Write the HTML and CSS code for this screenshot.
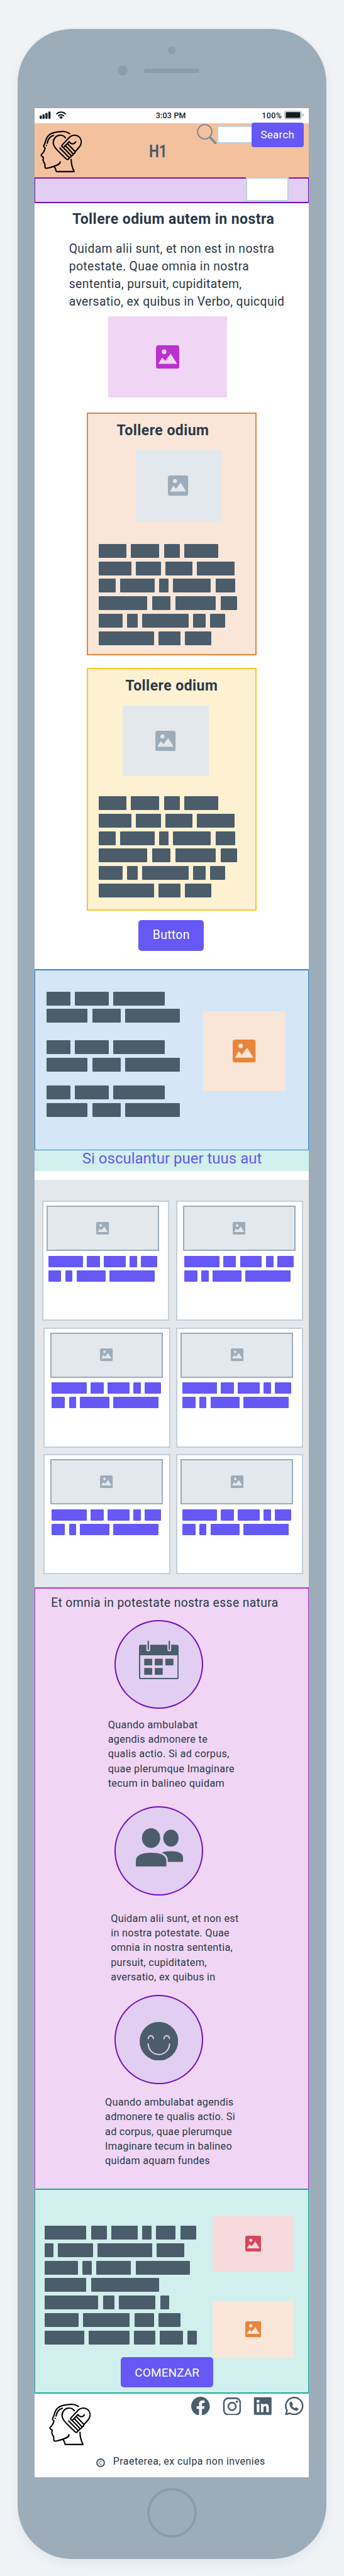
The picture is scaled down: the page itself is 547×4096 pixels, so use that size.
FILE: index.html
```html
<!DOCTYPE html>
<html lang="la">
<head>
<meta charset="utf-8">
<title>H1</title>
<link rel="stylesheet" href="styles.css">
</head>
<body>
<svg class="defs" aria-hidden="true">
  <symbol id="picture" viewBox="0 0 24 24"><path fill="currentColor" fill-rule="evenodd" d="M2.8 0H21.2Q24 0 24 2.8V21.2Q24 24 21.2 24H2.8Q0 24 0 21.2V2.8Q0 0 2.8 0ZM8.3 4.2A2.4 2.4 0 1 0 8.3 9 2.4 2.4 0 1 0 8.3 4.2ZM2.5 18.9H21.5L15 8.5 9.6 15.7 6.3 12.3Z"/></symbol>
  <symbol id="head" viewBox="0 0 66 66"><g fill="none" stroke="#000" stroke-width="2.1" stroke-linecap="round" stroke-linejoin="round">
    <path d="M46.7 4.3C42.5 1.6 38.5.8 34.5 1.1C26 1.5 18 3 14.2 6.5C8.2 12 8.5 17.5 7.2 20.5C5.8 22 4.9 24.5 6.2 25.8L7.8 27.5C6.8 31.5 4 35.8 1.6 38C.8 39.8 2 40.2 4.6 41.8C5.8 43.8 3.6 45.2 4.6 47C5.8 47.5 4.8 49 5.6 50.2C8.3 51.6 7.3 53.3 7.4 55.5C7.5 58 7.9 59.7 9.8 59.5C12 59.2 17 58 21.9 56.4C27 54.8 31.6 53.2 31.7 49.4"/>
    <path d="M21.9 56.4C23.8 59 25 62 25.6 64.9H54C51.5 60 49.2 54 49.2 45.6"/>
    <path d="M21.3 7.3C15.5 9 12.2 13.5 11.1 19.7M9.7 23.2V23.3"/>
    <path d="M40.1 11.2C36.5 5.8 28.5 5.8 24.3 10C20 14.5 20 20.5 22.8 25.5C25 29.5 38 41.5 41.5 44.8Q43.5 46.4 45 44.8Q46.6 43.6 46.2 42.5Q48.7 42.6 49.3 39.6Q52 40 52.3 36.8Q55.5 36.4 55.4 33.2C59.5 29 62.5 26 64 22.8C66.3 17.5 65 12 60.8 8.9C56.8 6.1 50.5 6.2 46.7 10L35 22.4C33 24.8 36 27.4 38.2 25.2L46 17.3C49 22 54 21.8 56.3 17.6"/>
    <path d="M31.2 27.4L46 42.5M36.3 26.2L49.2 39.6M40 23.5L52.3 36.8M43.4 20.6L55.4 33"/>
  </g></symbol>
</svg>

<div class="phone">
  <div class="speaker-area">
    <i class="camera"></i>
    <div class="earpiece"><i class="sensor"></i><i class="speaker"></i></div>
  </div>

  <div class="screen">
    <div class="status">
      <svg class="signal" viewBox="0 0 43 13"><g fill="#0f1a22"><rect x=".1" y="6.7" width="3.4" height="5.4" rx="1.3"/><rect x="4.6" y="4.7" width="3.4" height="7.4" rx="1.3"/><rect x="9.2" y="2.4" width="3.4" height="9.7" rx="1.3"/><rect x="13.9" y=".2" width="3.4" height="11.9" rx="1.3"/><path d="M31.2 9.4A3.5 3.5 0 0 1 37 9.4L34.1 12.2Z"/></g><g fill="none" stroke="#0f1a22" stroke-width="2"><path d="M26.6 4.5A10.5 10.5 0 0 1 41.6 4.5M29.4 7.5A6.6 6.6 0 0 1 38.8 7.5"/></g></svg>
      <span class="time">3:03 PM</span>
      <span class="charge">100%</span>
      <svg class="battery" viewBox="0 0 31 14"><rect x=".7" y=".7" width="26.2" height="12.2" rx="2.4" fill="none" stroke="#9fa3a7" stroke-width="1.1"/><rect x="2.3" y="2.2" width="23.1" height="9.2" rx="1.2" fill="#0f1a22"/><path d="M29 4.6Q30.8 5 30.8 6.9T29 9.2Z" fill="#9fa3a7"/></svg>
    </div>

    <header class="header">
      <svg class="logo"><use href="#head"/></svg>
      <h1>H1</h1>
      <div class="search">
        <svg class="lens" viewBox="0 0 32 32"><circle cx="12.6" cy="12.5" r="11.4" fill="none" stroke="#7d8b97" stroke-width="2"/><path d="M21.2 21.8L29.8 30.4" stroke="#7d8b97" stroke-width="3.6" stroke-linecap="round"/></svg>
        <span class="field"></span>
        <button class="btn">Search</button>
      </div>
    </header>
    <nav class="nav"><span class="menu"></span></nav>

    <main>
      <section class="intro">
        <h2>Tollere odium autem in nostra</h2>
        <p>Quidam alii sunt, et non est in nostra<br>potestate. Quae omnia in nostra<br>sententia, pursuit, cupiditatem,<br>aversatio, ex quibus in Verbo, quicquid</p>
        <div class="pic hero"><svg><use href="#picture"/></svg></div>

        <article class="card orange">
          <h2>Tollere odium</h2>
          <div class="pic"><svg><use href="#picture"/></svg></div>
          <div class="lines">
            <div class="a1"><i></i><i></i><i></i><i></i></div>
            <div class="a2"><i></i><i></i><i></i><i></i></div>
            <div class="a3"><i></i><i></i><i></i><i></i><i></i></div>
            <div class="a4"><i></i><i></i><i></i><i></i></div>
            <div class="a5"><i></i><i></i><i></i><i></i><i></i></div>
            <div class="a6"><i></i><i></i><i></i></div>
          </div>
        </article>

        <article class="card yellow">
          <h2>Tollere odium</h2>
          <div class="pic"><svg><use href="#picture"/></svg></div>
          <div class="lines">
            <div class="a1"><i></i><i></i><i></i><i></i></div>
            <div class="a2"><i></i><i></i><i></i><i></i></div>
            <div class="a3"><i></i><i></i><i></i><i></i><i></i></div>
            <div class="a4"><i></i><i></i><i></i><i></i></div>
            <div class="a5"><i></i><i></i><i></i><i></i><i></i></div>
            <div class="a6"><i></i><i></i><i></i></div>
          </div>
        </article>
        <button class="btn">Button</button>
      </section>

      <section class="blue">
        <div class="groups">
          <div class="lines"><div class="b1"><i></i><i></i><i></i></div><div class="b2"><i></i><i></i><i></i></div></div>
          <div class="lines"><div class="b1"><i></i><i></i><i></i></div><div class="b2"><i></i><i></i><i></i></div></div>
          <div class="lines"><div class="b1"><i></i><i></i><i></i></div><div class="b2"><i></i><i></i><i></i></div></div>
        </div>
        <div class="pic"><svg><use href="#picture"/></svg></div>
      </section>

      <div class="banner">Si osculantur puer tuus aut</div>

      <section class="gallery">
        <article class="tile first"><div class="pic"><svg><use href="#picture"/></svg></div><div class="lines"><div class="c1"><i></i><i></i><i></i><i></i><i></i></div><div class="c2"><i></i><i></i><i></i><i></i></div></div></article>
        <article class="tile wide"><div class="pic"><svg><use href="#picture"/></svg></div><div class="lines"><div class="c1"><i></i><i></i><i></i><i></i><i></i></div><div class="c2"><i></i><i></i><i></i><i></i></div></div></article>
        <article class="tile wide"><div class="pic"><svg><use href="#picture"/></svg></div><div class="lines"><div class="c1"><i></i><i></i><i></i><i></i><i></i></div><div class="c2"><i></i><i></i><i></i><i></i></div></div></article>
        <article class="tile"><div class="pic"><svg><use href="#picture"/></svg></div><div class="lines"><div class="c1"><i></i><i></i><i></i><i></i><i></i></div><div class="c2"><i></i><i></i><i></i><i></i></div></div></article>
        <article class="tile wide"><div class="pic"><svg><use href="#picture"/></svg></div><div class="lines"><div class="c1"><i></i><i></i><i></i><i></i><i></i></div><div class="c2"><i></i><i></i><i></i><i></i></div></div></article>
        <article class="tile"><div class="pic"><svg><use href="#picture"/></svg></div><div class="lines"><div class="c1"><i></i><i></i><i></i><i></i><i></i></div><div class="c2"><i></i><i></i><i></i><i></i></div></div></article>
      </section>

      <section class="features">
        <h3>Et omnia in potestate nostra esse natura</h3>
        <div class="disc calendar">
          <svg viewBox="0 0 63.2 61.2"><path fill="#4b5c6a" fill-rule="evenodd" d="M3 6.2H11.7V13.8A3 3 0 0 0 17.7 13.8V6.2H45.2V13.8A3 3 0 0 0 51.2 13.8V6.2H60.2Q63.2 6.2 63.2 9.2V58.2Q63.2 61.2 60.2 61.2H3Q0 61.2 0 58.2V9.2Q0 6.2 3 6.2ZM2 22.9V57.9Q2 58.9 3 58.9H60.2Q61.2 58.9 61.2 57.9V22.9Z"/><path d="M14.7 1V13.6M48.2 1V13.6" stroke="#4b5c6a" stroke-width="2.2" stroke-linecap="round"/><g fill="#4b5c6a"><rect x="8.3" y="28.4" width="12.7" height="10.7" rx=".6"/><rect x="25.1" y="28.4" width="12.7" height="10.7" rx=".6"/><rect x="41.9" y="28.4" width="12.9" height="10.7" rx=".6"/><rect x="8.3" y="43.2" width="12.7" height="10.7" rx=".6"/><rect x="25.1" y="43.2" width="12.7" height="10.7" rx=".6"/></g></svg>
        </div>
        <p class="t1">Quando ambulabat<br>agendis admonere te<br>qualis actio. Si ad corpus,<br>quae plerumque Imaginare<br>tecum in balineo quidam</p>
        <div class="disc people">
          <svg viewBox="0 0 75.3 61"><g fill="#4b5c6a"><ellipse cx="24.2" cy="15.7" rx="14.5" ry="15.7"/><ellipse cx="55.8" cy="15.8" rx="12.2" ry="13.5"/><path d="M0 59.5V52.5C0 43.5 7.5 39 24.2 39S48.5 43.5 48.5 52.5V59.5Q48.5 60.8 47.5 60.8H1Q0 60.8 0 59.5ZM41.2 39.1C44.5 37.3 49.5 36.6 55.8 36.6C69.5 36.6 75.3 41 75.3 48V52.4Q75.3 53.4 74.3 53.4H51C51 46 48.5 41.6 41.2 39.1Z"/></g></svg>
        </div>
        <p class="t2">Quidam alii sunt, et non est<br>in nostra potestate. Quae<br>omnia in nostra sententia,<br>pursuit, cupiditatem,<br>aversatio, ex quibus in</p>
        <div class="disc smile">
          <svg viewBox="0 0 61.2 61.6"><ellipse cx="30.6" cy="30.8" rx="30.6" ry="30.8" fill="#4b5c6a"/><g fill="none" stroke="#e2cef2" stroke-width="2" stroke-linecap="round"><path d="M13.7 26.6C13.7 20.6 22 20.6 22 26.6M38.9 26.6C38.9 20.6 47.5 20.6 47.5 26.6M13.7 35C14 45 22 51.8 30.6 51.8S47.3 45 47.6 35"/></g></svg>
        </div>
        <p class="t3">Quando ambulabat agendis<br>admonere te qualis actio. Si<br>ad corpus, quae plerumque<br>Imaginare tecum in balineo<br>quidam aquam fundes</p>
      </section>

      <section class="start">
        <div class="columns">
          <div class="lines">
            <div class="d1"><i></i><i></i><i></i><i></i><i></i><i></i></div>
            <div class="d2"><i></i><i></i><i></i><i></i></div>
            <div class="d3"><i></i><i></i><i></i><i></i></div>
            <div class="d4"><i></i><i></i></div>
            <div class="d5"><i></i><i></i><i></i><i></i></div>
            <div class="d6"><i></i><i></i><i></i><i></i></div>
            <div class="d7"><i></i><i></i><i></i><i></i><i></i></div>
          </div>
          <div class="pics">
            <div class="pic red"><svg><use href="#picture"/></svg></div>
            <div class="pic amber"><svg><use href="#picture"/></svg></div>
          </div>
        </div>
        <button class="btn">COMENZAR</button>
      </section>
    </main>

    <footer class="footer">
      <div class="top">
        <svg class="logo"><use href="#head"/></svg>
        <div class="social">
          <svg viewBox="0 0 16 16"><path fill="#4b5c6a" d="M16 8.049c0-4.446-3.582-8.05-8-8.05C3.58 0-.002 3.603-.002 8.05c0 4.017 2.926 7.347 6.75 7.951v-5.625h-2.03V8.05H6.75V6.275c0-2.017 1.195-3.131 3.022-3.131.876 0 1.791.157 1.791.157v1.98h-1.009c-.993 0-1.303.621-1.303 1.258v1.51h2.218l-.354 2.326H9.25V16c3.824-.604 6.75-3.934 6.75-7.951z"/></svg>
          <svg viewBox="0 0 30 30"><g fill="none" stroke="#4b5c6a" stroke-width="2.6"><rect x="2" y="2.4" width="26.4" height="26.4" rx="7.2"/><circle cx="15.2" cy="15.6" r="6.1"/></g><circle cx="23" cy="8" r="1.8" fill="#4b5c6a"/></svg>
          <svg viewBox="0 0 30 30"><rect x=".8" y=".7" width="28.4" height="28.4" rx="1.8" fill="#4b5c6a"/><g fill="#fff"><circle cx="7.4" cy="7.3" r="2.4"/><rect x="5.4" y="11.5" width="4.1" height="13.4"/><path d="M12.1 11.5H16V13.3C18 10.2 24.8 10.2 24.8 17V24.9H20.7V18.2C20.7 13.6 16.2 14 16.2 18.2V24.9H12.1Z"/></g></svg>
          <svg viewBox="0 0 16 16"><g fill="#4b5c6a"><path d="M13.601 2.326A7.85 7.85 0 0 0 7.994 0C3.627 0 .068 3.558.064 7.926c0 1.399.366 2.76 1.057 3.965L0 16l4.204-1.102a7.9 7.9 0 0 0 3.79.965h.004c4.368 0 7.926-3.558 7.93-7.93A7.9 7.9 0 0 0 13.6 2.326zM7.994 14.521a6.6 6.6 0 0 1-3.356-.92l-.24-.144-2.494.654.666-2.433-.156-.251a6.56 6.56 0 0 1-1.007-3.505c0-3.626 2.957-6.584 6.591-6.584a6.56 6.56 0 0 1 4.66 1.931 6.56 6.56 0 0 1 1.928 4.66c-.004 3.639-2.961 6.592-6.592 6.592z"/><path d="M4.6 4.4 5.9 4.3 7 6.6 6.2 7.6C6.7 8.6 7.5 9.4 8.5 9.9L9.5 9 11.7 10.1C11.8 11.3 10.8 12 9.8 12 6.8 11.8 4 8.8 3.9 6.2 3.9 5.4 4.1 4.8 4.6 4.4Z"/></g></svg>
        </div>
      </div>
      <div class="legal">
        <svg viewBox="0 0 14 14"><circle cx="7" cy="7" r="5.9" fill="none" stroke="#4b5c6a" stroke-width="2.1"/><path d="M9 5.4A2.5 2.5 0 1 0 9 8.6" fill="none" stroke="#4b5c6a" stroke-width="1"/></svg>
        <span>Praeterea, ex culpa non invenies</span>
      </div>
    </footer>
  </div>
  <i class="home"></i>
</div>
</body>
</html>
```
FILE: styles.css
```css
* { box-sizing: border-box; }
body { margin: 0; height: 4096px; overflow: hidden; background: #eff3f6; color: #293947; font-family: Roboto, "Liberation Sans", sans-serif; padding: 46.3px 0 0 27.9px; }
i { display: block; }
h1, h2, h3, p { margin: 0; font-weight: 400; }
svg { display: block; flex: none; }
.defs { position: absolute; width: 0; height: 0; }
button { font-family: inherit; border: 0; padding: 0; display: block; }

.phone { width: 491.2px; height: 4022.4px; background: #9dacb9; border-radius: 86px; box-shadow: 0 6px 16px rgba(40, 60, 80, .07); padding: 0 27.6px; }
.speaker-area { height: 125.4px; padding-top: 27.8px; }
.camera { width: 12px; height: 12px; border-radius: 50%; background: #8d9cab; margin: 0 auto; }
.earpiece { display: flex; align-items: center; gap: 26.8px; margin: 18.4px 0 0 131.2px; }
.sensor { width: 16px; height: 16px; border-radius: 50%; background: #8d9cab; }
.speaker { width: 88px; height: 7px; border-radius: 3.5px; background: #8d9cab; }
.screen { width: 436px; height: 3767.2px; background: #fff; overflow: hidden; }
.home { width: 79px; height: 79px; border-radius: 50%; border: 4.4px solid #8d9cab; margin: 17.3px auto 0; }

.btn { background: #6558f5; color: #fff; font-weight: 400; border-radius: 5px; text-align: center; letter-spacing: .25px; }
.pic { display: flex; align-items: center; justify-content: center; }

.status { height: 24.1px; display: flex; align-items: flex-start; color: #0f1a22; font-size: 12.5px; font-weight: 500; line-height: 24px; padding-left: 7.2px; }
.signal { width: 43px; height: 13px; margin-top: 5.5px; }
.time { width: 50px; margin-left: 142px; letter-spacing: .2px; }
.charge { width: 34px; margin-left: 118.7px; letter-spacing: .4px; }
.battery { width: 31px; height: 14px; margin: 4.7px 0 0 1.6px; }

.header { height: 85.9px; background: #f3c19e; display: flex; align-items: flex-start; }
.logo { width: 66px; height: 66px; }
.header .logo { margin: 11.8px 0 0 8.3px; }
h1 { width: 40px; margin: 29px 0 0 107.5px; color: #4b5c6a; font-size: 27.4px; line-height: 32px; font-weight: 700; transform: scaleX(.82); transform-origin: 0 0; }
.search { display: flex; align-items: flex-start; margin: -1.1px 0 0 35.3px; }
.lens { width: 32px; height: 32px; margin: 2.5px 0 0 0; }
.field { width: 55.1px; height: 27.6px; margin: 5.8px 0 0 0; background: #fff; border: 2px solid #c3cfd9; border-right: 0; }
.search .btn { width: 83.4px; height: 39.4px; font-size: 17px; border-radius: 4px; line-height: 39.4px; }
.nav { height: 41.7px; background: #e2cef2; border: solid #7210c0; border-width: 2px 1px; box-shadow: 0 5px 8px rgba(0, 0, 0, .035); padding-left: 334.2px; }
.menu { display: block; width: 68.4px; height: 38.4px; margin-top: -2px; background: #fff; border: 2px solid #c3cfd9; position: relative; top: -2px; }
.nav { display: flex; }
.menu { top: 0; }

h2 { font-size: 23px; line-height: 30px; font-weight: 700; letter-spacing: .45px; white-space: nowrap; }
.intro { height: 1217.2px; padding-top: 11.1px; }
.intro > h2 { margin-left: 59.4px; }
.intro > p { margin: 17.9px 0 0 54.2px; font-size: 19.3px; line-height: 27.87px; letter-spacing: .4px; white-space: nowrap; }
.hero { width: 189.8px; height: 128.8px; margin: 9.3px 0 0 116.1px; background: #f0d5f4; color: #bb31cf; }
.hero svg { width: 37.4px; height: 37.4px; }

.lines { display: grid; gap: 5.85px; }
.lines > div { display: grid; gap: 7.25px; height: 22px; }
.lines i { background: #4b5c6a; border-radius: 1.2px; }
.a1 { grid-template-columns: 43.3px 45.5px 25.3px 53.5px; }
.a2 { grid-template-columns: 51.8px 39.1px 42.8px 60.4px; }
.a3 { grid-template-columns: 26.7px 54.8px 14.3px 60.4px 31.1px; }
.a4 { grid-template-columns: 77.1px 29.6px 64.8px 26.6px; }
.a5 { grid-template-columns: 37.8px 16.2px 73.9px 19.8px 24px; }
.a6 { grid-template-columns: 87.5px 34.9px 41.6px; }
.b1 { grid-template-columns: 37.5px 53.7px 81.9px; }
.b2 { grid-template-columns: 65.1px 45.4px 86.5px; }
.c1 { grid-template-columns: 55.5px 20.5px 34.8px 12.3px 26px; }
.c2 { grid-template-columns: 20.9px 11.7px 46.2px 72px; }
.d1 { grid-template-columns: 66.6px 24.9px 41.9px 15px 31.1px 25.3px; }
.d2 { grid-template-columns: 14.2px 55.7px 87px 43.4px; }
.d3 { grid-template-columns: 53.3px 14.4px 55.4px 85.9px; }
.d4 { grid-template-columns: 66.6px 108.6px; }
.d5 { grid-template-columns: 85.5px 18.6px 58px 14.4px; }
.d6 { grid-template-columns: 54.3px 74.1px 31.2px 34.5px; }
.d7 { grid-template-columns: 62.8px 65.3px 33.6px 37px 14.5px; }

.card { width: 270px; margin-left: 82.3px; border: 2px solid; }
.card .pic { width: 137.8px; height: 112.1px; background: #e2e8ec; color: #9dacb9; }
.card .pic svg { width: 32.4px; height: 32.4px; }
.card .lines { margin-left: 17.6px; }
.orange { height: 386.1px; margin-top: 24.2px; background: #f9e6d8; border-color: #e8853a; padding-top: 12.2px; }
.orange h2 { margin-left: 45.8px; }
.orange .pic { margin: 16.1px 0 36.2px 74.8px; }
.yellow { height: 386.2px; margin-top: 19.5px; background: #fdf1d2; border-color: #f9c52a; padding-top: 12.4px; }
.yellow h2 { margin-left: 59.6px; }
.yellow .pic { margin: 16.1px 0 31.6px 54.9px; }
.intro > .btn { width: 104.3px; height: 48.6px; margin: 15.1px 0 0 164.6px; font-size: 19.5px; line-height: 48.6px; }

.blue { height: 288.5px; background: #d5e6f6; border: solid #2b86da; border-width: 2px 1px 1px; display: flex; align-items: flex-start; padding: 34px 0 0 17.8px; }
.groups { display: grid; row-gap: 27.8px; width: 198px; }
.groups .lines:last-child { margin-top: -5.6px; }
.blue .pic { width: 129.8px; height: 127.3px; margin: 31.3px 0 0 51.1px; background: #f9e6d8; color: #e8853a; }
.blue .pic svg { width: 36.6px; height: 36.6px; }

.banner { height: 32.6px; background: #d1efed; color: #6558f5; font-size: 24px; line-height: 26px; padding-left: 75.3px; white-space: nowrap; margin-bottom: 13.9px; }

.gallery { height: 648px; background: #e2e8ec; display: grid; grid-template-columns: 202px 202.3px; grid-auto-rows: 191px; gap: 10.5px 9.4px; padding: 33.7px 0 0 12.9px; }
.gallery .tile:nth-child(2n+1) { margin: 0 -.7px 0 .7px; }
.gallery .tile.first { margin: 0 1.7px 0 -1.7px; }
.tile { background: #fff; border: 2px solid #c3cfd9; padding: 6px 0 0 5.7px; }
.tile.wide { padding-left: 9.2px; }
.tile .pic { width: 178.6px; height: 71.9px; background: #e2e8ec; border: 2px solid #9dacb9; color: #9dacb9; }
.tile .pic svg { width: 20.4px; height: 20.4px; }
.tile .lines { margin: 7.5px 0 0 2.2px; gap: 5.1px; }
.tile .lines > div { height: 18px; gap: 6.2px; }
.tile .lines i { background: #6558f5; }

.features { height: 956.2px; background: #f0d5f4; border: solid #bb31cf; border-width: 2px 1px 0; padding-top: 8.6px; }
h3 { font-size: 19.3px; line-height: 30px; letter-spacing: .38px; margin-left: 24.7px; white-space: nowrap; }
.disc { width: 141px; height: 141.5px; margin-left: 125.9px; background: #e2cef2; border: 2px solid #7210c0; border-radius: 50%; }
.features p { font-size: 16.3px; line-height: 23.23px; white-space: nowrap; }
.calendar { margin-top: 11.4px; }
.calendar svg { width: 63.2px; height: 61.2px; margin: 31.4px 0 0 36.9px; }
.t1 { margin: 13.9px 0 0 115.2px; letter-spacing: .32px; }
.people { margin-top: 25.4px; }
.people svg { width: 75.3px; height: 61px; margin: 32.7px 0 0 31.3px; }
.t2 { margin: 25px 0 0 119.7px; letter-spacing: .27px; }
.smile { margin-top: 17.2px; }
.smile svg { width: 61.2px; height: 61.6px; margin: 40.3px 0 0 37.9px; }
.t3 { margin: 17.3px 0 0 110.6px; letter-spacing: .22px; }

.start { height: 325.8px; background: #d1efed; border: solid #17ae9f; border-width: 2px 1px; padding-top: 41px; }
.columns { display: flex; align-items: flex-start; height: 224.8px; }
.columns > .lines { margin: 16.2px 0 0 14.3px; width: 242px; }
.pics { display: grid; gap: 47.3px; margin-left: 25.6px; }
.pics .pic { width: 128.7px; height: 89.3px; }
.pics svg { width: 25.5px; height: 25.5px; }
.red { background: #f6dadd; color: #d6455d; }
.amber { background: #f9e6d8; color: #e8853a; }
.start .btn { position: relative; width: 147.2px; height: 48.8px; margin-left: 135.7px; font-size: 19px; line-height: 49px; letter-spacing: .1px; }

.footer .top { display: flex; align-items: flex-start; }
.footer .logo { margin: 16.1px 0 0 22.1px; }
.social { display: flex; gap: 20.1px; margin: 5.1px 0 0 160.4px; }
.social svg { width: 29.6px; height: 29.6px; }
.legal { display: flex; align-items: center; font-size: 16px; letter-spacing: .44px; line-height: 24px; margin: 14.2px 0 0 97.5px; }
.legal svg { width: 14px; height: 14px; margin: 4px 12.8px 0 0; }
```
